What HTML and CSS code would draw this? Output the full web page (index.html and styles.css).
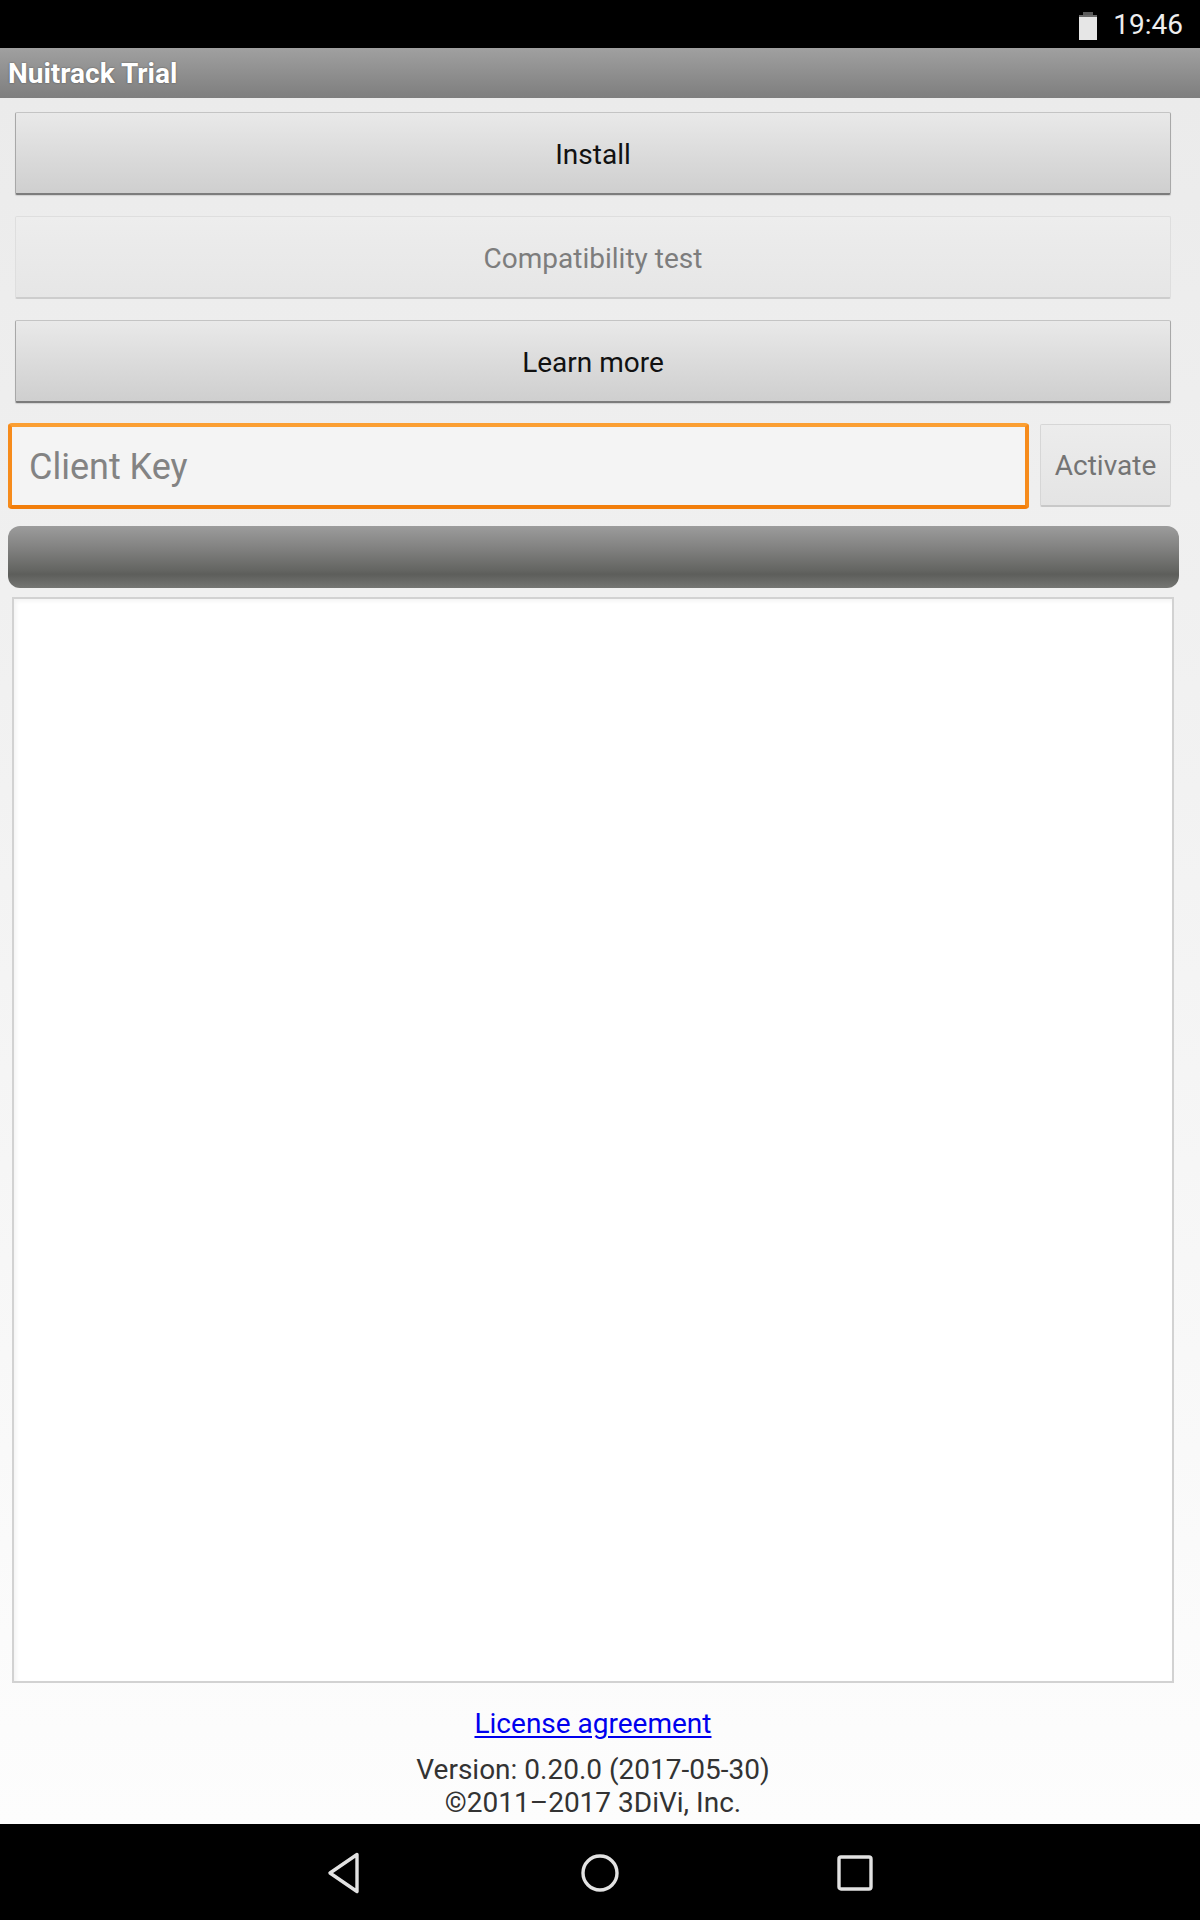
FILE: index.html
```html
<!DOCTYPE html>
<html>
<head>
<meta charset="utf-8">
<title>Nuitrack Trial</title>
<link rel="stylesheet" href="styles.css">
</head>
<body>
<div class="screen">
  <div class="status">
    <svg class="battery" width="20" height="30" viewBox="0 0 20 30">
      <rect x="5" y="1" width="10" height="5" fill="#5a5a5a"/>
      <rect x="1" y="4" width="18" height="25" fill="#e6e6e6"/>
      <rect x="1" y="4" width="18" height="2" fill="#6a6a6a"/>
    </svg>
    <span class="time">19:46</span>
  </div>
  <div class="titlebar"><span class="title">Nuitrack Trial</span></div>
  <div class="content">
    <div class="btn">Install</div>
    <div class="btn disabled">Compatibility test</div>
    <div class="btn">Learn more</div>
    <div class="keyrow">
      <div class="keyinput">Client Key</div>
      <div class="activate">Activate</div>
    </div>
    <div class="progress"></div>
    <div class="log"></div>
    <div class="footer">
      <a class="license" href="#">License agreement</a>
      <div class="version">Version: 0.20.0 (2017-05-30)<br>©2011–2017 3DiVi, Inc.</div>
    </div>
  </div>
  <div class="navbar">
    <svg class="nav-icon" width="40" height="44" viewBox="0 0 40 44">
      <path d="M32 3.5 L5 22 L32 40.5 Z" fill="none" stroke="#e2e2e2" stroke-width="3.4" stroke-linejoin="round"/>
    </svg>
    <svg class="nav-icon" width="40" height="44" viewBox="0 0 40 44">
      <circle cx="20" cy="22" r="17" fill="none" stroke="#e2e2e2" stroke-width="3.4"/>
    </svg>
    <svg class="nav-icon" width="40" height="44" viewBox="0 0 40 44">
      <rect x="4" y="6" width="32" height="32" rx="2" fill="none" stroke="#e2e2e2" stroke-width="3.4"/>
    </svg>
  </div>
</div>
</body>
</html>
```
FILE: styles.css
```css
html, body {
  margin: 0;
  padding: 0;
  background: #000;
}
.screen {
  width: 1200px;
  height: 1920px;
  display: flex;
  flex-direction: column;
  font-family: Roboto, "Noto Sans", sans-serif;
}
.status {
  height: 48px;
  background: #000;
  display: flex;
  align-items: center;
  justify-content: flex-end;
  padding-right: 17px;
  gap: 15px;
}
.battery {
  display: block;
  margin-top: 4px;
}
.time {
  color: #eeeeee;
  font-size: 28px;
  line-height: 1;
  margin-top: 1px;
}
.titlebar {
  height: 50px;
  background: linear-gradient(#a0a0a0, #7e7e7e);
  display: flex;
  align-items: center;
  padding-left: 8px;
}
.title {
  color: #fff;
  font-weight: bold;
  font-size: 28px;
  text-shadow: 0 0 2px rgba(0,0,0,0.45);
  margin-top: 1px;
}
.content {
  flex: 1;
  background: linear-gradient(#ebebeb 0%, #f2f2f2 40%, #fdfdfd 100%);
  display: flex;
  flex-direction: column;
  padding-top: 14px;
  padding-bottom: 5px;
  box-sizing: border-box;
}
.btn {
  height: 83px;
  margin: 0 29px 21px 15px;
  padding-top: 2px;
  box-sizing: border-box;
  background: linear-gradient(#e9e9e9, #d9d9d9 60%, #cfcfcf);
  border: 1px solid #c4c4c4;
  border-left-color: #a8a8a8;
  border-right-color: #a8a8a8;
  border-bottom: 2px solid #7c7c7c;
  border-radius: 2px;
  box-shadow: 0 1px 1px rgba(0,0,0,0.12);
  display: flex;
  align-items: center;
  justify-content: center;
  font-size: 28px;
  color: #111;
}
.btn.disabled {
  background: linear-gradient(#ededed, #e6e6e6);
  border-color: #dedede;
  border-bottom: 2px solid #cdcdcd;
  box-shadow: none;
  color: #7d7d7d;
}
.btn:nth-of-type(3) {
  margin-bottom: 20px;
}
.keyrow {
  display: flex;
  align-items: flex-start;
  margin: 0 29px 0 8px;
  gap: 11px;
}
.keyinput {
  flex: 1;
  height: 86px;
  box-sizing: border-box;
  background: #f4f4f4;
  border: 4px solid #f68b1b;
  border-top-color: #fb9f33;
  border-bottom-color: #f27e0b;
  border-radius: 4px;
  display: flex;
  align-items: center;
  padding-left: 17px;
  padding-top: 2px;
  font-size: 36px;
  color: #838383;
}
.activate {
  width: 131px;
  height: 83px;
  margin-top: 1px;
  box-sizing: border-box;
  background: linear-gradient(#ececec, #e4e4e4);
  border: 1px solid #d6d6d6;
  border-bottom: 2px solid #c8c8c8;
  border-radius: 2px;
  display: flex;
  align-items: center;
  justify-content: center;
  font-size: 28px;
  color: #747474;
}
.progress {
  height: 62px;
  margin: 17px 21px 9px 8px;
  border-radius: 12px;
  background: linear-gradient(#9c9c9c 0%, #828281 35%, #656663 70%, #5d5e5b 78%, #757673 100%);
}
.log {
  flex: 1;
  margin: 0 26px 0 12px;
  background: #fff;
  border: 2px solid #d2d2d2;
  box-shadow: inset 2px 2px 4px rgba(0,0,0,0.05);
}
.footer {
  display: flex;
  flex-direction: column;
  align-items: center;
  margin-top: 24px;
  padding-right: 14px;
  font-size: 28px;
  line-height: 33px;
}
.license {
  color: #0000ee;
  text-decoration: underline;
  text-underline-offset: 3px;
}
.version {
  margin-top: 13px;
  color: #333;
  text-align: center;
}
.navbar {
  height: 96px;
  background: #000;
  display: flex;
  align-items: center;
  justify-content: center;
  gap: 215px;
  padding-right: 1px;
}
.nav-icon {
  display: block;
  margin-top: 2px;
}
```
